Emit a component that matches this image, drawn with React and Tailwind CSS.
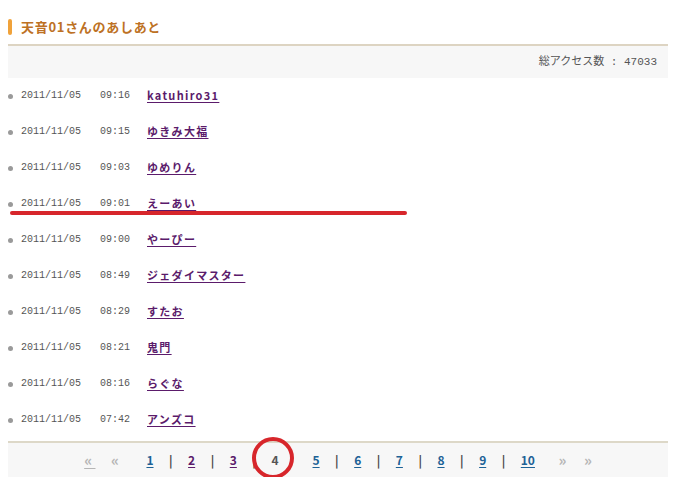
import React from 'react';

const rows = [
  { date: '2011/11/05', time: '09:16', name: 'katuhiro31' },
  { date: '2011/11/05', time: '09:15', name: 'ゆきみ大福' },
  { date: '2011/11/05', time: '09:03', name: 'ゆめりん' },
  { date: '2011/11/05', time: '09:01', name: 'えーあい' },
  { date: '2011/11/05', time: '09:00', name: 'やーぴー' },
  { date: '2011/11/05', time: '08:49', name: 'ジェダイマスター' },
  { date: '2011/11/05', time: '08:29', name: 'すたお' },
  { date: '2011/11/05', time: '08:21', name: '鬼門' },
  { date: '2011/11/05', time: '08:16', name: 'らぐな' },
  { date: '2011/11/05', time: '07:42', name: 'アンズコ' },
];

const mono = { fontFamily: '"Liberation Mono", "Noto Sans CJK JP", monospace' };

const Sep = () => <span className="text-[#444] font-bold text-[12px]">|</span>;

const PageLink = ({ n, visited }) => (
  <a
    href="#"
    className={`font-bold text-[12px] underline underline-offset-2 ${visited ? 'text-[#5b1b6b]' : 'text-[#1d6296]'}`}
  >
    {n}
  </a>
);

export default function App() {
  return (
    <div className="relative w-[679px] h-[477px] bg-white overflow-hidden font-['Noto_Sans_CJK_JP',sans-serif]">
      <div className="ml-[8px] w-[660px]">
        {/* Header */}
        <div className="h-[44px] pt-[19px] flex items-start">
          <span className="w-[4px] h-[16px] rounded-sm bg-[#f0a23a]" />
          <h2 className="ml-[9px] leading-[16px] text-[13px] font-bold tracking-[0.7px] text-[#bd7124]">
            天音01さんのあしあと
          </h2>
        </div>
        <div className="h-[2px] bg-[#ddd4c2]" />
        <div
          className="h-[32px] bg-[#f7f7f7] flex items-center justify-end pr-[11px] text-[11px] text-[#555]"
          style={mono}
        >
          総アクセス数 : 47033
        </div>

        {/* Rows */}
        <ul className="pb-[3px]">
          {rows.map((r, i) => (
            <li key={i} className="h-[36px] flex items-center text-[10px] text-[#555]">
              <span className="w-[5px] h-[5px] rounded-full bg-[#9a9a9a]" />
              <span className="ml-[8px] w-[79px] pb-[1px]" style={mono}>{r.date}</span>
              <span className="w-[47px] pb-[1px]" style={mono}>{r.time}</span>
              <a
                href="#"
                className="text-[11px] font-bold tracking-[1.3px] text-[#5b1b6b] underline underline-offset-2 pb-[1px]"
              >
                {r.name}
              </a>
            </li>
          ))}
        </ul>

        {/* Pagination */}
        <div className="h-[2px] bg-[#ddd8c8]" />
        <div className="h-[34px] bg-[#f7f7f7] flex items-center justify-center gap-[15.5px]">
          <span className="text-[#b5b5b5] font-bold text-[15px] underline underline-offset-2">«&nbsp;</span>
          <span className="text-[#b5b5b5] font-bold text-[15px] mr-[12px]">«</span>
          <PageLink n="1" />
          <Sep />
          <PageLink n="2" visited />
          <Sep />
          <PageLink n="3" visited />
          <Sep />
          <span className="font-bold text-[12px] text-[#555]">4</span>
          <span className="w-[3px]" />
          <PageLink n="5" />
          <Sep />
          <PageLink n="6" />
          <Sep />
          <PageLink n="7" />
          <Sep />
          <PageLink n="8" />
          <Sep />
          <PageLink n="9" />
          <Sep />
          <PageLink n="10" />
          <span className="text-[#b5b5b5] font-bold text-[15px] ml-[8px]">»</span>
          <span className="text-[#b5b5b5] font-bold text-[15px] ml-[2px]">»</span>
        </div>
      </div>

      {/* Red annotations */}
      <div className="absolute left-[10px] top-[211px] w-[397px] h-[4px] rounded-full bg-[#d7262b]" />
      <div className="absolute left-[252px] top-[437px] w-[42px] h-[42px] rounded-full border-[4px] border-[#d7262b]" />
    </div>
  );
}
